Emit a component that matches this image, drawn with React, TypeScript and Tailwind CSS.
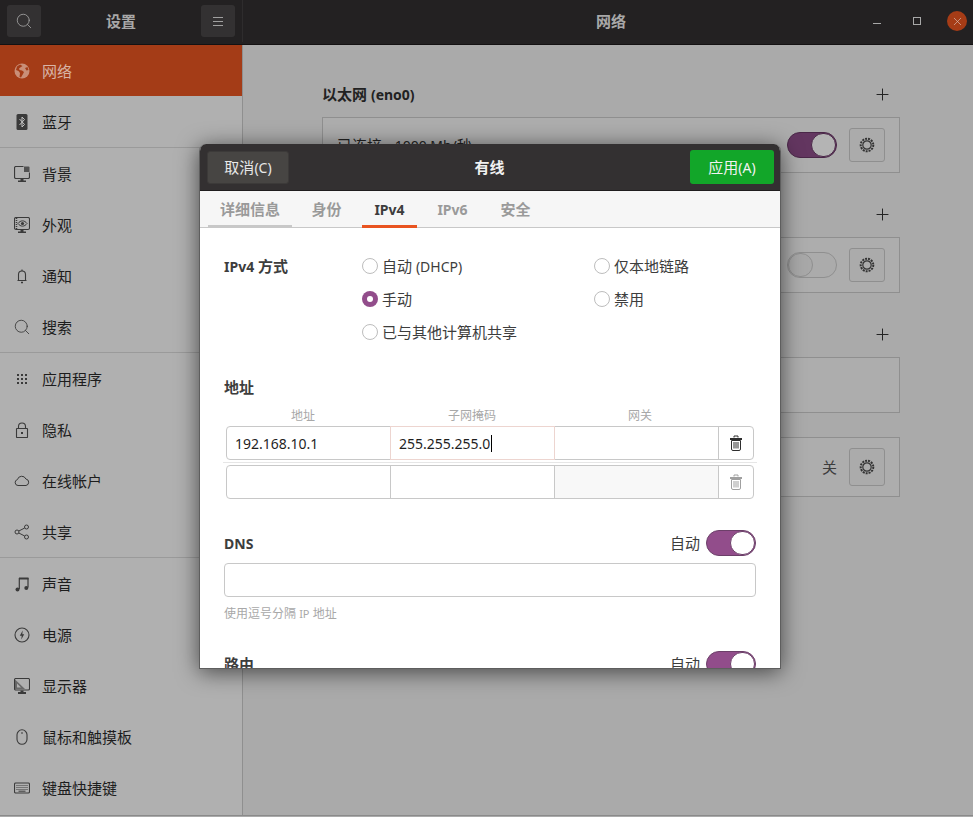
import React from 'react';
import { Search, Plus, X } from 'lucide-react';

const iconProps = {
  width: 16,
  height: 16,
  viewBox: '0 0 16 16',
  fill: 'none',
  stroke: 'currentColor',
  strokeWidth: 1,
};

const GlobeIcon = () => (
  <svg {...iconProps}>
    <circle cx="8" cy="8" r="7.5" fill="currentColor" stroke="none" />
    <path d="M6 1.5 3 3.5 2 7l2.5 1 1.5 2-.5 4 1.5.5 2-3.5 1-2-2-1.5-2.5-.5-.5-1.5L7 4l1.5-1zM11 5l2.5-1 1 3-2 .5z" fill="#a43c17" stroke="none" />
  </svg>
);

const BluetoothIcon = () => (
  <svg {...iconProps}>
    <rect x="2.5" y="0" width="11" height="16" rx="1.5" fill="currentColor" stroke="none" />
    <path d="M5.5 5 10.5 10.5 8 13V3l2.5 2.5L5.5 11" stroke="#c4c4c4" strokeWidth="1" />
  </svg>
);

const BackgroundIcon = () => (
  <svg {...iconProps}>
    <path d="M9.5.5H2A1.5 1.5 0 0 0 .5 2v9A1.5 1.5 0 0 0 2 12.5h12a1.5 1.5 0 0 0 1.5-1.5V6.500" strokeWidth="1.2" />
    <path d="M10 0.500h4.500a1 1 0 0 1 1 1V6H10z" fill="currentColor" stroke="none" opacity="0.8" />
    <path d="M6.500 13h3v1.500H12V16H4v-1.500h2.500z" fill="currentColor" stroke="none" />
  </svg>
);

const AppearanceIcon = () => (
  <svg {...iconProps}>
    <rect x="0.500" y="0.500" width="15" height="12" rx="1.500" strokeWidth="1.100" />
    <path d="M2.500 1v11" strokeWidth="1.500" strokeDasharray="1 1" />
    <path d="M4 6.500C6.500 3 10.500 3 13 6.500 10.500 10 6.500 10 4 6.500z" strokeWidth="1" />
    <circle cx="8.500" cy="6.500" r="1.600" fill="currentColor" stroke="none" />
    <path d="M6.500 13h3v1.500H12V16H4v-1.500h2.500z" fill="currentColor" stroke="none" />
  </svg>
);

const BellIcon = () => (
  <svg {...iconProps}>
    <path d="M3.500 12.500h9M4.500 12V6.500a3.500 3.500 0 0 1 7 0V12" strokeWidth="1.100" />
    <path d="M7 14.500h2" strokeWidth="1.400" />
    <path d="M8 1.500v1.500" strokeWidth="1.100" />
  </svg>
);

const SearchIcon = () => <Search size={18} strokeWidth={1.15} className="-m-px block" />;

const AppsIcon = () => (
  <svg {...iconProps}>
    {[3, 7, 11].flatMap((y) =>
      [3, 7, 11].map((x) => <rect key={`${x}-${y}`} x={x} y={y} width="2" height="2" fill="currentColor" stroke="none" />),
    )}
  </svg>
);

const LockIcon = () => (
  <svg {...iconProps}>
    <rect x="2.500" y="6.500" width="11" height="9" rx="0.500" strokeWidth="1.100" />
    <path d="M4.500 6.500V4.500a3.500 3.500 0 0 1 7 0v2" strokeWidth="1.100" />
    <rect x="7" y="10" width="2" height="2" fill="currentColor" stroke="none" />
  </svg>
);

const CloudIcon = () => (
  <svg {...iconProps}>
    <path d="M4 12.500a3 3 0 0 1-.6-5.900 4.500 4.500 0 0 1 8.500-.6A3.300 3.300 0 0 1 12 12.500z" strokeWidth="1" />
  </svg>
);

const ShareIcon = () => (
  <svg {...iconProps}>
    <circle cx="12.500" cy="3" r="2" />
    <circle cx="12.500" cy="13" r="2" />
    <circle cx="3" cy="8" r="2" />
    <path d="M4.800 7 10.700 4M4.800 9l5.900 3" />
  </svg>
);

const MusicIcon = () => (
  <svg {...iconProps}>
    <path d="M5 1.500h9.500v2H5z" fill="currentColor" stroke="none" />
    <path d="M5.300 2v11M14 2v9.500" strokeWidth="1.200" />
    <circle cx="3.500" cy="13.500" r="2" fill="currentColor" stroke="none" />
    <circle cx="12.300" cy="12" r="2" fill="currentColor" stroke="none" />
  </svg>
);

const PowerIcon = () => (
  <svg {...iconProps}>
    <circle cx="8" cy="8" r="7" strokeWidth="1.100" />
    <path d="M8.700 3.500 5.800 8.700h1.900L7.300 12.500l2.900-5.200H8.300z" fill="currentColor" stroke="none" />
  </svg>
);

const DisplayIcon = () => (
  <svg {...iconProps}>
    <rect x="0.500" y="0.500" width="15" height="11.500" rx="1.200" strokeWidth="1.100" />
    <path d="M1 1.500 11 11H1z" fill="currentColor" stroke="none" opacity="0.6" />
    <path d="M3 5.500v4h4z" fill="#b0b0b0" stroke="none" />
    <path d="M6.500 12.500h3v1.500H12V16H4v-2h2.500z" fill="currentColor" stroke="none" />
  </svg>
);

const MouseIcon = () => (
  <svg {...iconProps}>
    <rect x="3" y="0.800" width="10" height="14.500" rx="5" strokeWidth="1.100" />
    <path d="M8 3v2" strokeWidth="1" />
  </svg>
);

const KeyboardIcon = () => (
  <svg {...iconProps}>
    <rect x="0.500" y="3" width="15" height="10" rx="1.200" strokeWidth="1.100" />
    <path d="M2.500 5.500h11M2.500 7.500h11M2.500 9.500h11" strokeWidth="1" strokeDasharray="1 1" />
    <path d="M4.500 11.200h7" strokeWidth="1" />
  </svg>
);

const GearIcon = () => (
  <svg width="16" height="16" viewBox="0 0 16 16" fill="none" stroke="currentColor">
    <circle cx="8" cy="8" r="6.300" strokeWidth="2" strokeDasharray="2 1" />
    <circle cx="8" cy="8" r="4.200" strokeWidth="1.200" />
  </svg>
);

const TrashIcon = ({ className }: { className: string }) => (
  <svg width="12" height="16" viewBox="0 0 12 16" fill="none" stroke="currentColor" className={className}>
    <path d="M4 2.500V1h4v1.500" strokeWidth="1" />
    <path d="M0 3h12v2H0z" fill="currentColor" stroke="none" />
    <path d="M1.500 5.500h9V14a1.500 1.500 0 0 1-1.500 1.500H3A1.500 1.500 0 0 1 1.500 14z" strokeWidth="1" />
    <path d="M4 7v6.500M6 7v6.500M8 7v6.500" strokeWidth="1" />
  </svg>
);

const sidebarGroups = [
  [
    { label: '网络', icon: GlobeIcon, active: true },
    { label: '蓝牙', icon: BluetoothIcon },
  ],
  [
    { label: '背景', icon: BackgroundIcon },
    { label: '外观', icon: AppearanceIcon },
    { label: '通知', icon: BellIcon },
    { label: '搜索', icon: SearchIcon },
  ],
  [
    { label: '应用程序', icon: AppsIcon },
    { label: '隐私', icon: LockIcon },
    { label: '在线帐户', icon: CloudIcon },
    { label: '共享', icon: ShareIcon },
  ],
  [
    { label: '声音', icon: MusicIcon },
    { label: '电源', icon: PowerIcon },
    { label: '显示器', icon: DisplayIcon },
    { label: '鼠标和触摸板', icon: MouseIcon },
    { label: '键盘快捷键', icon: KeyboardIcon },
  ],
];

// latin runs sit a touch smaller than the CJK text, same as the Ubuntu font does
const Latin = ({ children }: { children: React.ReactNode }) => <span className="text-[14px]">{children}</span>;

const Switch = ({ on, dim }: { on: boolean; dim?: boolean }) => {
  if (dim) {
    return on ? (
      <div className="flex h-[26px] w-[50px] justify-end rounded-full border border-[#4a2748] bg-[#633660]">
        <div className="h-full w-[25px] rounded-full border border-[#4a2748] bg-[#b4b4b4]" />
      </div>
    ) : (
      <div className="h-[26px] w-[50px] rounded-full border border-[#8f8f8f] bg-[#ababab]">
        <div className="h-full w-[25px] rounded-full border border-[#8f8f8f] bg-[#a8a8a8]" />
      </div>
    );
  }
  return (
    <div className="flex h-[26px] w-[50px] shrink-0 justify-end rounded-full border border-[#6c3f69] bg-[#924d8b]">
      <div className="h-full w-[25px] rounded-full border border-[#6c3f69] bg-white" />
    </div>
  );
};

const GearButton = ({ tall }: { tall?: boolean }) => (
  <div className={`flex w-9 items-center justify-center rounded-[3px] border border-[#8f8f8f] bg-[#ababab] text-[#333] ${tall ? 'h-[38px]' : 'h-[34px]'}`}>
    <GearIcon />
  </div>
);

const SectionHeading = ({ children }: { children?: React.ReactNode }) => (
  <div className="mb-[11px] flex h-6 items-center justify-between pr-[10px]">
    <span className="text-[15px] font-bold text-[#222]">{children}</span>
    <Plus size={19} strokeWidth={1.26} className="-m-[1.5px] text-[#222]" />
  </div>
);

const Box = ({ children, tall }: { children?: React.ReactNode; tall?: boolean }) => (
  <div className={`flex items-center justify-between border border-[#8f8f8f] bg-[#adadad] pl-[14px] pr-[14px] ${tall ? 'h-[60px]' : 'h-[56px]'}`}>
    {children}
  </div>
);

const Radio = ({ label, checked }: { label: React.ReactNode; checked?: boolean }) => (
  <div className="flex h-[33px] items-center gap-[4px] text-[15px] leading-none text-[#3d3d3d]">
    {checked ? (
      <span className="flex h-4 w-4 items-center justify-center rounded-full bg-[#924d8b]">
        <span className="h-[6px] w-[6px] rounded-full bg-white" />
      </span>
    ) : (
      <span className="h-4 w-4 rounded-full border border-[#bdbdbd] bg-white" />
    )}
    <span className="mt-[2px]">{label}</span>
  </div>
);

const tabs = [
  { label: '详细信息', cls: 'w-[84px] border-[#c8c8c8] text-[#9a9a9a]' },
  { label: '身份', cls: 'w-[53px] ml-[8px] border-transparent text-[#9a9a9a]' },
  { label: <Latin>IPv4</Latin>, cls: 'w-[55px] ml-[9px] border-[#e95420] text-[#3d3d3d]' },
  { label: <Latin>IPv6</Latin>, cls: 'w-[55px] ml-[8px] border-transparent text-[#9a9a9a]' },
  { label: '安全', cls: 'w-[53px] ml-[9px] border-transparent text-[#9a9a9a]' },
];

const cell = 'flex w-[164px] items-center border-r border-[#c8c8c8] px-[8px] text-[14px]';

const NetworkDialog = () => (
  <div className="absolute left-[199px] top-[144px] flex h-[525px] w-[582px] flex-col overflow-hidden rounded-t-[7px] border-x border-b border-[#5e5e5e] bg-white shadow-[0_3px_22px_rgba(0,0,0,0.6)]">
    <div className="relative flex h-[47px] shrink-0 items-center justify-between border-b border-[#1f1d1e] bg-[#333031] pl-[7px] pr-[6px]">
      <div className="flex h-[33px] w-[82px] items-center justify-center rounded-[3px] border border-[#3c3a39] bg-[#474543] text-[15px] text-[#e8e8e8]">
        取消<Latin>(C)</Latin>
      </div>
      <span className="text-[15px] font-bold text-[#f0f0f0]">有线</span>
      <div className="flex h-[34px] w-[84px] items-center justify-center rounded-[3px] bg-[#12a629] text-[15px] text-[#f2f2f2]">
        应用<Latin>(A)</Latin>
      </div>
    </div>

    <div className="flex h-[37px] shrink-0 items-stretch border-b border-[#c8c8c8] bg-[#f6f6f6] pl-[8px]">
      {tabs.map((t, i) => (
        <div key={i} className={`-mb-px flex items-center justify-center border-b-[3px] pt-[2px] text-[15px] font-bold ${t.cls}`}>
          {t.label}
        </div>
      ))}
    </div>

    <div className="flex flex-col px-[24px] pt-[21px]">
      <div className="flex">
        <div className="mt-px flex h-[33px] w-[138px] items-center text-[15px] font-bold text-[#3d3d3d]">
          <Latin>IPv4</Latin>&nbsp;方式
        </div>
        <div className="w-[232px]">
          <Radio label={<>自动 <Latin>(DHCP)</Latin></>} />
          <Radio label="手动" checked />
          <Radio label="已与其他计算机共享" />
        </div>
        <div>
          <Radio label="仅本地链路" />
          <Radio label="禁用" />
        </div>
      </div>

      <div className="mt-[28px] text-[15px] font-bold leading-[22px] text-[#3d3d3d]">地址</div>
      <div className="ml-[2px] mt-[10px] flex w-[528px] text-[12px] leading-[16px] text-[#a8a8a8]">
        <span className="w-[154px] text-center">地址</span>
        <span className="w-[184px] text-center">子网掩码</span>
        <span className="w-[152px] text-center">网关</span>
      </div>
      <div className="ml-[2px] mt-[2px] flex h-[34px] w-[528px] rounded-[4px] border border-[#c8c8c8] text-[#1f1f1f]">
        <div className="flex w-[163px] items-center px-[8px] text-[14px]">192.168.10.1</div>
        <div className="-my-px flex h-[34px] w-[165px] items-center border border-[#edd5d0] px-[8px] text-[14px]">
          255.255.255.0
          <span className="ml-[1px] h-[17px] w-px bg-black" />
        </div>
        <div className="w-[164px] border-r border-[#c8c8c8]" />
        <div className="flex flex-1 items-center justify-center">
          <TrashIcon className="text-[#2e2e2e]" />
        </div>
      </div>
      <div className="-mx-px my-[2px] h-px bg-[#e6e6e6]" />
      <div className="ml-[2px] flex h-[34px] w-[528px] rounded-[4px] border border-[#c8c8c8]">
        <div className={cell} />
        <div className={cell} />
        <div className={`${cell} bg-[#f8f8f8]`} />
        <div className="flex flex-1 items-center justify-center">
          <TrashIcon className="text-[#a0a0a0]" />
        </div>
      </div>

      <div className="mt-[31px] flex h-[26px] items-center">
        <span className="text-[14px] font-bold text-[#3d3d3d]">DNS</span>
        <span className="ml-auto mr-[6px] text-[15px] text-[#3d3d3d]">自动</span>
        <Switch on />
      </div>
      <div className="mt-[7px] h-[34px] rounded-[4px] border border-[#c8c8c8]" />
      <div className="mt-[8px] text-[12px] leading-[18px] text-[#a8a8a8]">
        使用逗号分隔 <span className="text-[11px]">IP</span> 地址
      </div>

      <div className="mt-[28px] flex h-[26px] shrink-0 items-center">
        <span className="text-[15px] font-bold text-[#3d3d3d]">路由</span>
        <span className="ml-auto mr-[6px] text-[15px] text-[#3d3d3d]">自动</span>
        <Switch on />
      </div>
    </div>
  </div>
);

export default function App() {
  return (
    <div className="relative h-[817px] w-[973px] overflow-hidden bg-[#aaaaaa] font-['Noto_Sans','Noto_Sans_CJK_SC',sans-serif]">
      <div className="flex h-[816px] flex-col border-b border-[#8a8a8a]">
        {/* Title bar */}
        <header className="flex h-[45px] shrink-0 border-b border-[#141213] bg-[#232122] pb-[2px]">
          <div className="flex w-[243px] shrink-0 items-center justify-between border-r border-[#2e2c2d] px-[7px]">
            <div className="flex h-[32px] w-[34px] items-center justify-center rounded-[3px] bg-[#333132] text-[#a0a0a0]">
              <Search size={18} strokeWidth={1.15} />
            </div>
            <span className="text-[15px] font-bold text-[#a8a8a8]">设置</span>
            <div className="flex h-[32px] w-[34px] flex-col items-center justify-center gap-[3px] rounded-[3px] bg-[#333132]">
              <span className="h-px w-[10px] bg-[#a0a0a0]" />
              <span className="h-px w-[10px] bg-[#a0a0a0]" />
              <span className="h-px w-[10px] bg-[#a0a0a0]" />
            </div>
          </div>
          <div className="flex flex-1 items-center pl-[353px] pr-[6px]">
            <span className="text-[15px] font-bold text-[#a8a8a8]">网络</span>
            <span className="ml-auto mr-[32px] mt-[5px] h-px w-2 bg-[#a8a8a8]" />
            <span className="mr-[26px] h-2 w-2 border border-[#a8a8a8]" />
            <span className="flex h-5 w-5 items-center justify-center rounded-full bg-[#a63c16] text-[#dcc4ba]">
              <X size={13} strokeWidth={1.2} />
            </span>
          </div>
        </header>

        <div className="flex min-h-0 flex-1">
          {/* Sidebar */}
          <aside className="w-[243px] shrink-0 border-r border-[#8f8f8f] bg-[#b0b0b0]">
            {sidebarGroups.map((group, g) => (
              <div key={g} className={g > 0 ? 'border-t border-[#9a9a9a]' : ''}>
                {group.map((item) => (
                  <div
                    key={item.label}
                    className={`flex h-[51px] items-center gap-[12px] pl-[14px] text-[15px] ${item.active ? 'bg-[#a43c17] text-[#d8b4a6]' : 'text-[#1d1d1d]'}`}
                  >
                    <span className={item.active ? 'text-[#c98f78]' : 'text-[#3a3a3a]'}>
                      <item.icon />
                    </span>
                    <span className="mt-[2px]">{item.label}</span>
                  </div>
                ))}
              </div>
            ))}
          </aside>

          {/* Network panel */}
          <main className="flex-1 pl-[79px] pr-[73px] pt-[37px]">
            <SectionHeading>
              以太网 <Latin>(eno0)</Latin>
            </SectionHeading>
            <Box>
              <span className="text-[15px] text-[#222]">已连接 - <Latin>1000 Mb/</Latin>秒</span>
              <div className="flex items-center gap-3">
                <Switch on dim />
                <GearButton />
              </div>
            </Box>
            <div className="mt-[29px]">
              <SectionHeading />
              <Box>
                <span />
                <div className="flex items-center gap-3">
                  <Switch on={false} dim />
                  <GearButton />
                </div>
              </Box>
            </div>
            <div className="mt-[29px]">
              <SectionHeading />
              <Box />
            </div>
            <div className="mt-[24px]">
              <Box tall>
                <span />
                <div className="flex items-center gap-3">
                  <span className="text-[15px] text-[#3d3d3d]">关</span>
                  <GearButton tall />
                </div>
              </Box>
            </div>
          </main>
        </div>
      </div>

      <NetworkDialog />
    </div>
  );
}
